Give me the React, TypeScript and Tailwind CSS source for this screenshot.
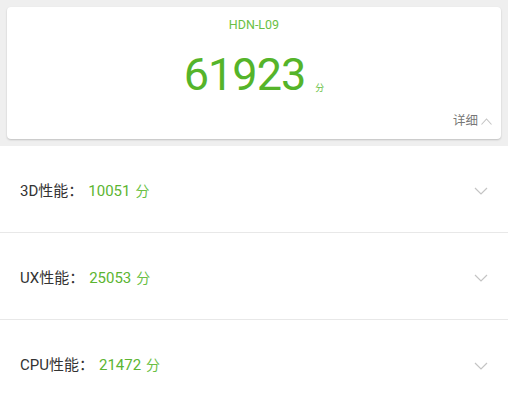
const font = { fontFamily: 'Roboto, "Noto Sans CJK SC", sans-serif' };

const rows = [
  { label: '3D性能：', score: '10051' },
  { label: 'UX性能：', score: '25053' },
  { label: 'CPU性能：', score: '21472' },
];

const Chevron = () => (
  <svg width="14" height="8" viewBox="0 0 14 8" fill="none" stroke="#c4c4c4" strokeWidth="1.2">
    <polyline points="1,1 7,7 13,1" />
  </svg>
);

export default function App() {
  return (
    <div className="w-[508px] h-[400px] overflow-hidden bg-white" style={font}>
      {/* Total score card */}
      <div className="bg-[#efefef] px-[7px] pt-[7px] pb-[7px]">
        <div className="h-[132px] rounded bg-white shadow-[0_1px_2px_rgba(0,0,0,0.2)] flex flex-col items-center relative">
          <div className="mt-[10px] text-[12.5px] leading-[16px] text-[#6abf45]">HDN-L09</div>
          <div className="mt-[19px] flex items-end">
            <span className="text-[45px] leading-[46px] tracking-[-1px] text-[#55b42a]">61923</span>
            <span className="ml-[10px] mb-[3px] text-[9px] text-[#6abf45]">分</span>
          </div>
          <div className="absolute right-[9px] bottom-[8px] flex items-center gap-[3px] text-[12.5px] text-[#777]">
            <span>详细</span>
            <svg width="11" height="7" viewBox="0 0 11 7" fill="none" stroke="#c4c4c4" strokeWidth="1.1">
              <polyline points="0.5,6.5 5.5,1 10.5,6.5" />
            </svg>
          </div>
        </div>
      </div>

      {/* Sub scores */}
      {rows.map((r, i) => (
        <div
          key={r.label}
          className={`h-[87px] flex items-center pt-[4px] pl-[20px] pr-[20px] ${i < rows.length - 1 ? 'border-b border-[#e8e8e8]' : ''}`}
        >
          <span className="text-[15px] text-[#333]">{r.label}</span>
          <span className="ml-[5px] text-[15px] text-[#5cb531]">{r.score}</span>
          <span className="ml-[5px] text-[14px] text-[#6abf45]">分</span>
          <div className="ml-auto">
            <Chevron />
          </div>
        </div>
      ))}
    </div>
  );
}
